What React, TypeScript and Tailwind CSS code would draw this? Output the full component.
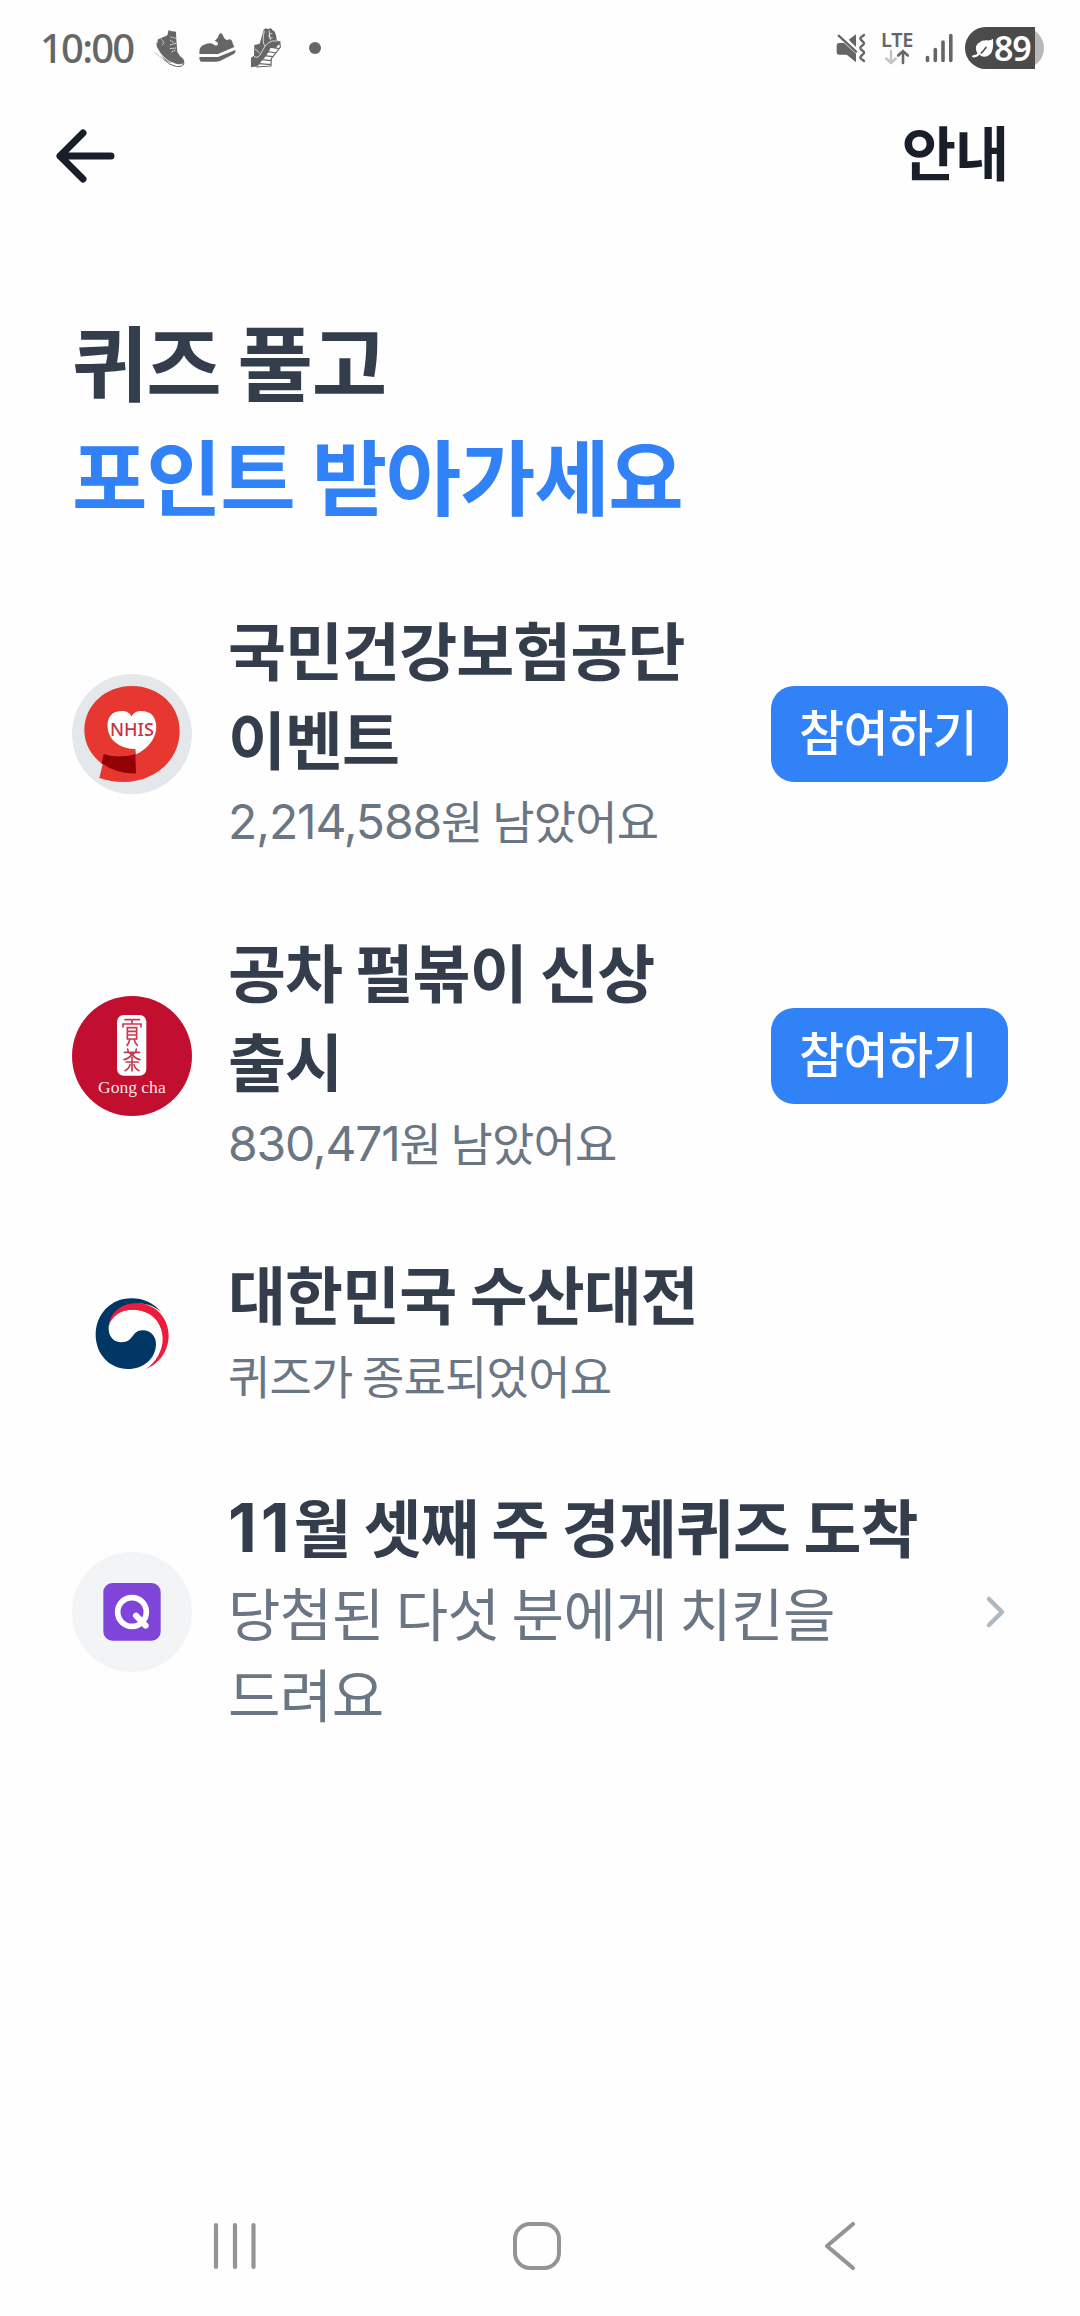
import React from 'react';

type Quiz = {
  id: string;
  title: React.ReactNode;
  description: React.ReactNode;
  logo: React.ReactNode;
  action?: 'join' | 'link';
  large?: boolean;
};

const BootIcon = () => (
  <svg width="31" height="40" viewBox="0 0 93 120">
    <path
      d="M10 35 L40 22 L44 6 L50 9 L66 11 L67 36 L70 72 Q76 84 88 93 Q94 104 88 109 Q70 114 54 102 Q36 90 26 68 L12 46 Z"
      fill="#666"
    />
    <path d="M8 42 Q4 56 20 78 Q34 100 52 106 L58 96 L30 60 Z" fill="#666" />
    <path d="M8 58 Q26 92 56 106 Q72 114 88 108" stroke="#fff" strokeWidth="2.5" fill="none" />
    <path d="M28 93 Q46 112 68 116 Q84 117 91 108" stroke="#666" strokeWidth="3" fill="none" />
    <path d="M2 74 L30 95" stroke="#666" strokeWidth="2" strokeDasharray="3 2" />
    <path
      d="M50 27 L66 31 M48 36 L61 45 M48 51 L66 46 M48 62 L66 60 M53 72 L64 66 M22 34 L30 43 L24 52"
      stroke="#fff"
      strokeWidth="2.5"
      fill="none"
      strokeDasharray="5 2"
    />
  </svg>
);

const SneakerIcon = () => (
  <svg width="38" height="32" viewBox="0 0 114 96">
    <path
      d="M4 66 Q2 42 22 37 Q36 30 46 37 Q54 44 59 38 Q64 32 50 27 Q60 20 63 8 Q68 0 74 8 Q82 30 94 22 Q102 22 104 34 L109 45 L60 66 Z"
      fill="#666"
    />
    <path d="M4 75 H60 L112 54 Q114 62 106 67 L66 87 Q60 89 52 89 H10 Q4 89 4 75 Z" fill="#666" />
  </svg>
);

const RunnerIcon = () => (
  <svg width="33" height="42" viewBox="0 0 99 126">
    <path
      d="M44 8 L50 4 L56 6 L66 4 Q71 12 77 14 Q83 26 83 40 L94 46 L80 64 L65 62 Q54 86 40 99 L26 118 L6 121 L6 92 L15 86 L16 54 L32 50 Z"
      fill="#666"
    />
    <path
      d="M15 88 Q28 98 38 75 Q56 36 84 42 M46 12 Q38 44 48 58 M60 10 L64 40 M70 20 a7 7 0 1 0 1 12 M18 66 L32 78"
      stroke="#fff"
      strokeWidth="2.2"
      fill="none"
    />
    <path
      d="M64 48 L95 52 M60 60 L91 65 M52 73 L82 78 M45 86 L72 89 M37 98 L68 101 M30 110 L67 113 M22 120 L66 117 L67 95 L94 60 L92 42"
      stroke="#666"
      strokeWidth="3.5"
      fill="none"
    />
  </svg>
);

const MuteIcon = () => (
  <svg width="30" height="30" viewBox="0 0 90 90">
    <path d="M9 30 H24 L60 62 V88 L32 65 H9 Q2 65 2 57 V39 Q2 30 9 30 Z" fill="#666" />
    <path d="M38 20 L60 4 V42 Z" fill="#666" />
    <path d="M8 8 L60 56" stroke="#666" strokeWidth="7" strokeLinecap="round" />
    <path
      d="M84 6 L75 13 Q71 17 75 21 L82 27 Q86 31 82 35 L75 41 Q71 45 75 49 L82 55 Q86 59 82 63 L75 69 Q71 73 75 77 L84 84"
      stroke="#666"
      strokeWidth="7"
      strokeLinecap="round"
      fill="none"
    />
  </svg>
);

const DataIcon = () => (
  <svg width="26" height="16" viewBox="0 0 26 16">
    <path d="M7 2 V14 M2.2 9.5 L7 14 L11.8 9.5" stroke="#c4c4c4" strokeWidth="2.4" strokeLinecap="round" fill="none" />
    <path d="M19 14 V2 M14.2 6.5 L19 2 L23.8 6.5" stroke="#666" strokeWidth="2.6" strokeLinecap="round" fill="none" />
  </svg>
);

const SignalIcon = () => (
  <svg width="28" height="30" viewBox="0 0 28 30">
    <path
      d="M2.5 24.5 V27.5 M10.3 16.5 V27.5 M18 9 V27.5 M25.8 2.5 V27.5"
      stroke="#666"
      strokeWidth="3.6"
      strokeLinecap="round"
    />
  </svg>
);

const LeafIcon = () => (
  <svg width="22" height="20" viewBox="0 0 66 60">
    <path
      d="M15 44 Q6 24 21 14 Q29 6 46 7 Q56 8 63 2 Q67 46 47 54 Q33 60 22 50 Z"
      fill="#fff"
    />
    <path d="M4 55 Q26 53 42 28" stroke="#4b4b4b" strokeWidth="5" fill="none" strokeLinecap="round" />
    <path d="M4 55 Q14 54 23 46" stroke="#fff" strokeWidth="7" fill="none" strokeLinecap="round" />
  </svg>
);

const NhisLogo = () => (
  <svg className="size-[120px]" viewBox="36 42 360 360">
    <circle cx="216" cy="222" r="180" fill="#e4e8eb" />
    <path
      d="M216 78 C296 78 359 135 359 213 C359 300 285 366 190 366 Q154 366 118 354 L128 313 C94 288 73 252 73 211 C73 135 137 78 216 78 Z"
      fill="#e73731"
    />
    <path
      d="M215 170 C222 150 250 149 269 159 C287 170 292 196 287 217 C280 248 253 272 228 283 L226 267 C190 267 158 250 147 221 C137 193 144 165 165 157 C186 149 208 152 215 170 Z"
      fill="#fff"
    />
    <path d="M131 282 Q174 297 226 283 L228 340 Q172 343 125 310 Z" fill="#930006" />
    <text
      x="150"
      y="227"
      textLength="132"
      lengthAdjust="spacingAndGlyphs"
      fill="#c9343a"
      fontSize="54"
      fontWeight="500"
      fontFamily="Noto Sans, sans-serif"
    >
      NHIS
    </text>
  </svg>
);

const GongchaLogo = () => (
  <svg className="size-[120px]" viewBox="36 33 360 360">
    <circle cx="216" cy="213" r="180" fill="#c20e2f" />
    <rect x="171" y="90" width="88" height="182" rx="20" fill="#fff" />
    <g stroke="#c73a50" strokeWidth="5" fill="none" strokeLinecap="round">
      <path d="M195 104 H238 M216 104 V116 M189 126 V117 H243 V126 M202 162 V128 H230 V162 Z M202 139 H230 M202 150 H230 M209 163 Q208 174 201 181 M223 163 Q224 174 232 181" />
      <path d="M193 202 H239 M203 192 Q204 204 212 206 M229 192 Q228 204 220 206 M192 224 Q209 220 216 207 Q223 220 240 224 M198 231 H235 M216 217 V258 M210 239 Q208 250 195 257 M222 239 Q224 250 237 257" />
    </g>
    <text
      x="114"
      y="323"
      textLength="203"
      lengthAdjust="spacingAndGlyphs"
      fill="#fbe3e6"
      fontSize="49"
      fontFamily="Liberation Serif, serif"
    >
      Gong cha
    </text>
  </svg>
);

const GovernmentLogo = () => (
  <svg className="size-[120px]" viewBox="36 8 360 360">
    <path
      d="M146 170 C150 120 190 98 228 98 C288 98 326 145 326 195 C326 240 300 280 256 297 C290 275 308 238 308 205 C308 150 268 118 218 118 C180 118 152 140 146 170 Z"
      fill="#ee1c3c"
    />
    <path
      d="M303 125 C278 102 250 98 226 100 C180 104 146 132 146 176 C146 199 162 216 184 216 C222 216 214 180 248 180 C272 180 288 198 288 220 C288 264 250 296 204 296 C148 296 107 250 107 194 C107 132 152 84 214 84 C250 84 282 98 303 125 Z"
      fill="#003764"
    />
    <path
      d="M148 154 C154 132 186 118 218 118 C268 118 308 150 308 205 C308 150 280 99 228 99 C190 99 158 120 148 154 Z"
      fill="#ee1c3c"
    />
  </svg>
);

const QuizLogo = () => (
  <svg className="size-[120px]" viewBox="36 36 360 360">
    <circle cx="216" cy="216" r="180" fill="#f2f4f6" />
    <rect x="130" y="129" width="172" height="173" rx="27" fill="#7f45d9" />
    <circle cx="216" cy="216" r="43" stroke="#fff" strokeWidth="17" fill="none" />
    <path d="M228 227 L257 257" stroke="#fff" strokeWidth="18" strokeLinecap="round" />
  </svg>
);

const quizzes: Quiz[] = [
  {
    id: 'nhis',
    title: (
      <>
        국민건강보험공단
        <br />
        이벤트
      </>
    ),
    description: (
      <>
        <span className="font-['Inter'] text-[48px] leading-none tracking-[-1.1px]">2,214,588</span>원 남았어요
      </>
    ),
    logo: <NhisLogo />,
    action: 'join',
  },
  {
    id: 'gongcha',
    title: (
      <>
        공차 펄볶이 신상
        <br />
        출시
      </>
    ),
    description: (
      <>
        <span className="font-['Inter'] text-[48px] leading-none tracking-[-1.2px]">830,471</span>원 남았어요
      </>
    ),
    logo: <GongchaLogo />,
    action: 'join',
  },
  {
    id: 'fishery',
    title: '대한민국 수산대전',
    description: '퀴즈가 종료되었어요',
    logo: <GovernmentLogo />,
  },
  {
    id: 'economy',
    title: (
      <>
        <span className="font-['Inter'] text-[67px] leading-none tracking-[3.8px]">11</span>월 셋째 주 경제퀴즈 도착
      </>
    ),
    description: (
      <>
        당첨된 다섯 분에게 치킨을
        <br />
        드려요
      </>
    ),
    logo: <QuizLogo />,
    action: 'link',
    large: true,
  },
];

const StatusBar = () => (
  <div className="flex h-[96px] items-center justify-between pl-[40px] pr-[36px]">
    <div className="flex items-center">
      <span className="w-[114px] font-['Noto_Sans'] text-[40px] font-medium leading-none tracking-[-1.8px] text-[#666]">
        10:00
      </span>
      <div className="flex items-center gap-[13px]">
        <BootIcon />
        <SneakerIcon />
        <RunnerIcon />
      </div>
      <span className="ml-[27px] size-[12px] rounded-full bg-[#666]" />
    </div>
    <div className="flex items-center">
      <MuteIcon />
      <div className="ml-[14px] flex w-[34px] flex-col items-center">
        <span className="font-['Noto_Sans'] text-[20px] font-semibold leading-[18px] tracking-[-0.3px] text-[#666]">
          LTE
        </span>
        <DataIcon />
      </div>
      <div className="ml-[11px]">
        <SignalIcon />
      </div>
      <div className="ml-[12px] h-[42px] w-[79px] rounded-full bg-[#b8b8b8]">
        <div className="flex h-full w-[70px] items-center rounded-l-full bg-[#4b4b4b] pl-[7px]">
          <LeafIcon />
          <span className="font-['Noto_Sans'] text-[34px] font-semibold leading-[40px] tracking-[-1.2px] text-white">
            89
          </span>
        </div>
      </div>
    </div>
  </div>
);

const QuizRow = ({ quiz }: { quiz: Quiz }) => (
  <li className="flex items-center">
    {quiz.logo}
    <div className="ml-[36px] flex-1 whitespace-nowrap pb-[10px]">
      <h2 className="text-[63px] font-bold leading-[89px] tracking-[-0.9px] text-[#343d4c]">{quiz.title}</h2>
      <p
        className={
          quiz.large
            ? 'pt-[2px] text-[57px] leading-[81px] tracking-[-0.6px] text-[#6b7684]'
            : 'pt-[4px] text-[46px] leading-[69px] tracking-[-0.8px] text-[#6b7684]'
        }
      >
        {quiz.description}
      </p>
    </div>
    {quiz.action === 'join' && (
      <button className="h-[96px] w-[237px] rounded-[23px] bg-[#3182f6] pb-[9px] pr-[3px] text-[49px] font-medium leading-none tracking-[-0.6px] text-white">
        참여하기
      </button>
    )}
    {quiz.action === 'link' && (
      <svg className="mr-[2px]" width="20" height="32" viewBox="0 0 20 32">
        <path d="M3 3 L16 16 L3 29" stroke="#b0b8c1" strokeWidth="4.5" strokeLinecap="round" strokeLinejoin="round" fill="none" />
      </svg>
    )}
  </li>
);

const NavigationBar = () => (
  <nav className="flex h-[140px] items-center justify-between pl-[212px] pr-[224px]">
    <svg width="46" height="50" viewBox="0 0 46 50">
      <path d="M4 4 V46 M23 4 V46 M41.5 4 V46" stroke="#949494" strokeWidth="4.2" strokeLinecap="round" />
    </svg>
    <div className="mr-[8px] size-[48px] rounded-[17px] border-[4.5px] border-[#949494]" />
    <svg width="32" height="50" viewBox="0 0 32 50">
      <path d="M29 3 L3 25 L29 47" stroke="#949494" strokeWidth="4.2" strokeLinecap="round" strokeLinejoin="round" fill="none" />
    </svg>
  </nav>
);

export default function App() {
  return (
    <div className="flex h-[2316px] w-[1080px] flex-col bg-[#fefefe] font-['Noto_Sans_CJK_KR',sans-serif]">
      <StatusBar />

      <header className="flex h-[120px] items-center justify-between pl-[54px] pr-[72px]">
        <svg width="64" height="60" viewBox="0 0 64 60">
          <path
            d="M29 7 L6 30 L29 53 M6 30 H57"
            stroke="#191f28"
            strokeWidth="7"
            strokeLinecap="round"
            strokeLinejoin="round"
            fill="none"
          />
        </svg>
        <span className="pb-[11px] text-[59px] font-bold leading-none tracking-[-1.2px] text-[#191f28]">안내</span>
      </header>

      <main className="flex-1 px-[72px] pt-[87px]">
        <h1 className="text-[82px] font-bold leading-[114px] tracking-[-1.3px] text-[#343d4c]">
          퀴즈 풀고
          <br />
          <span className="text-[#3182f6]">포인트 받아가세요</span>
        </h1>

        <ul className="flex flex-col gap-[61px] pt-[72px]">
          {quizzes.map((quiz) => (
            <QuizRow key={quiz.id} quiz={quiz} />
          ))}
        </ul>
      </main>

      <NavigationBar />
    </div>
  );
}
